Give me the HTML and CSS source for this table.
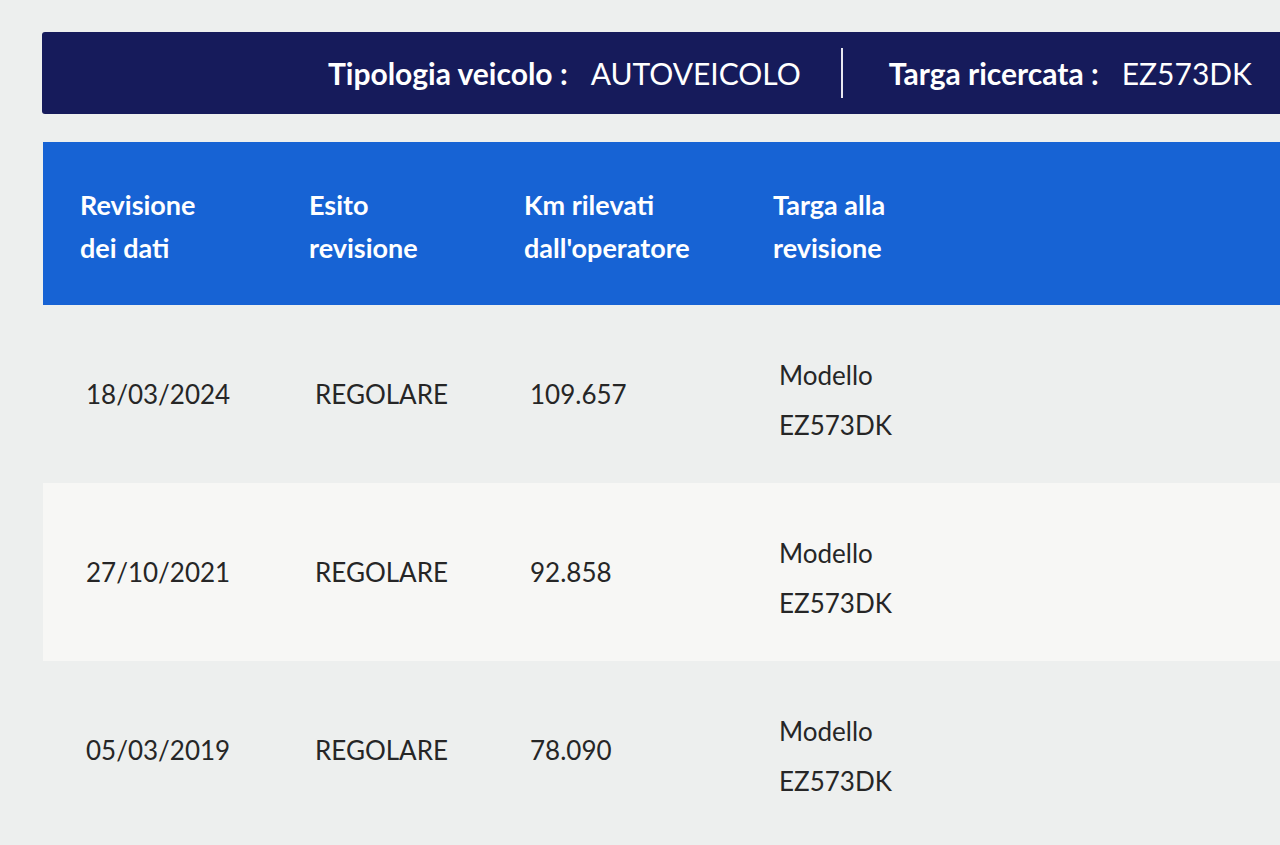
FILE: index.html
```html
<!DOCTYPE html>
<html lang="it">
  <head>
    <title>Revisioni veicolo</title>
    <meta charset="UTF-8" />
    <meta name="viewport" content="width=device-width, initial-scale=1" />
    <link rel="stylesheet" href="styles.css">
  </head>

  <body>
    <div class="summary-bar">
      <span class="summary-item">
        <span class="summary-label">Tipologia veicolo :</span>
        <span class="summary-value">AUTOVEICOLO</span>
      </span>
      <span class="summary-divider"></span>
      <span class="summary-item">
        <span class="summary-label">Targa ricercata :</span>
        <span class="summary-value">EZ573DK</span>
      </span>
    </div>

    <div class="results">
      <div class="results-head">
        <div class="head-cell">Revisione<br />dei dati</div>
        <div class="head-cell">Esito<br />revisione</div>
        <div class="head-cell">Km rilevati<br />dall'operatore</div>
        <div class="head-cell">Targa alla<br />revisione</div>
      </div>

      <div class="results-row">
        <div class="cell">18/03/2024</div>
        <div class="cell">REGOLARE</div>
        <div class="cell">109.657</div>
        <div class="cell cell-plate">Modello<br />EZ573DK</div>
      </div>

      <div class="results-row striped">
        <div class="cell">27/10/2021</div>
        <div class="cell">REGOLARE</div>
        <div class="cell">92.858</div>
        <div class="cell cell-plate">Modello<br />EZ573DK</div>
      </div>

      <div class="results-row">
        <div class="cell">05/03/2019</div>
        <div class="cell">REGOLARE</div>
        <div class="cell">78.090</div>
        <div class="cell cell-plate">Modello<br />EZ573DK</div>
      </div>
    </div>
  </body>
</html>
```

FILE: styles.css
```css
body {
  margin: 0;
  background: #edefee;
  font-family: Lato, "Open Sans", sans-serif;
  color: #262626;
  overflow: hidden;
}

.summary-bar {
  margin: 32px 0 0 42px;
  height: 82px;
  background-color: #161b5b;
  border-top-left-radius: 3px;
  border-bottom-left-radius: 3px;
  display: flex;
  align-items: center;
  justify-content: flex-end;
  padding-right: 28px;
  color: #fff;
}

.summary-item {
  display: flex;
  align-items: baseline;
  gap: 23px;
}

.summary-label {
  font-weight: bold;
  font-size: 30px;
}

.summary-value {
  font-size: 30px;
}

.summary-divider {
  width: 2px;
  height: 50px;
  background-color: #e8e8f0;
  margin: 0 46px 0 40px;
}

.results {
  margin: 28px 0 0 43px;
}

.results-head,
.results-row {
  display: grid;
  grid-template-columns: 229px 215px 249px 1fr;
  padding-left: 37px;
}

.results-head {
  background-color: #1763d4;
  height: 163px;
  align-items: center;
  color: #fff;
  font-weight: bold;
  font-size: 27px;
  line-height: 43px;
}

.head-cell {
  padding-top: 4px;
}

.results-row {
  height: 178px;
  align-items: center;
  font-size: 26px;
}

.results-row.striped {
  background-color: #f7f7f5;
}

.cell {
  padding-left: 6px;
}

.cell-plate {
  line-height: 50px;
  padding-top: 12px;
}
```
